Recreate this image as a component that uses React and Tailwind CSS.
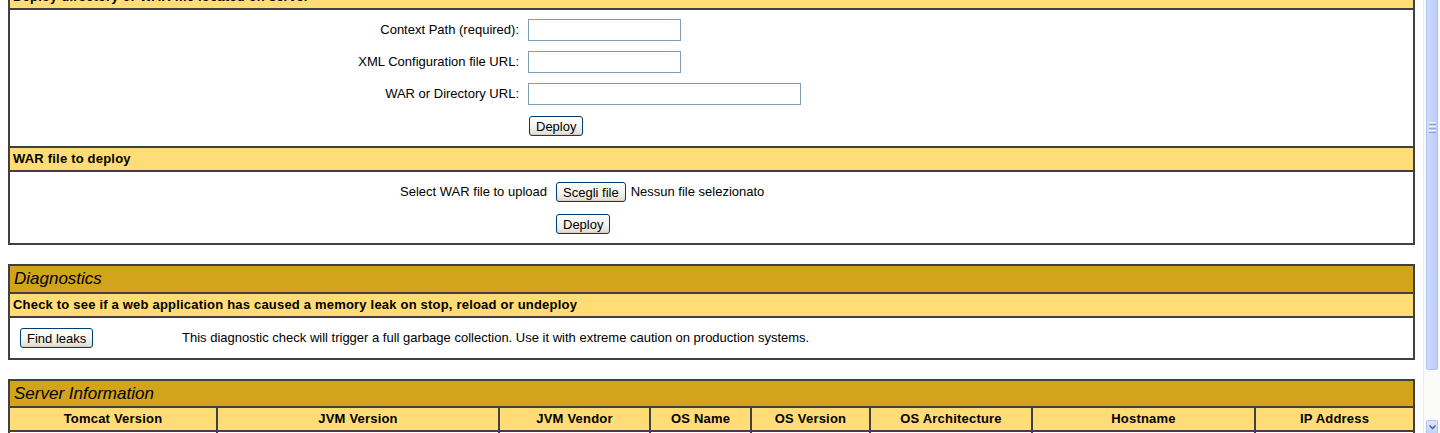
import React from 'react';

const XpButton = ({ children }) => (
  <button
    type="button"
    className="h-[20px] px-[6px] rounded-[3px] border border-[#003c74] bg-linear-to-b from-white via-[#f6f5f0] to-[#dedcd2] text-[13px] leading-none text-black shadow-[inset_0_-1px_0_#d6d0c5]"
  >
    {children}
  </button>
);

const FormRow = ({ label, labelWidth, children }) => (
  <div className="flex h-[32px] items-center">
    <div className={`${labelWidth} pr-[9px] text-right`}>{label}</div>
    <div className="flex items-center">{children}</div>
  </div>
);

const App = () => {
  const serverCols = [
    'Tomcat Version',
    'JVM Version',
    'JVM Vendor',
    'OS Name',
    'OS Version',
    'OS Architecture',
    'Hostname',
    'IP Address',
  ];

  return (
    <div className="flex h-[433px] overflow-hidden bg-white font-['Liberation_Sans',Arial,sans-serif] text-[13px] text-black">
      <div className="flex-1 px-[8px]">
        {/* Deploy */}
        <div className="-mt-[16px] border-2 border-[#404040]">
          <div className="flex h-[24px] items-center border-b-2 border-[#404040] bg-[#ffdc75] pl-[3px] font-bold tracking-[0.2px]">
            Deploy directory or WAR file located on server
          </div>
          <div className="border-b-2 border-[#404040] pt-[4px] pb-[4px]">
            <FormRow label="Context Path (required):" labelWidth="w-[518px]">
              <input type="text" className="h-[22px] w-[153px] border border-[#7f9db9] bg-white" />
            </FormRow>
            <FormRow label="XML Configuration file URL:" labelWidth="w-[518px]">
              <input type="text" className="h-[22px] w-[153px] border border-[#7f9db9] bg-white" />
            </FormRow>
            <FormRow label="WAR or Directory URL:" labelWidth="w-[518px]">
              <input type="text" className="h-[22px] w-[273px] border border-[#7f9db9] bg-white" />
            </FormRow>
            <FormRow label="" labelWidth="w-[519px]">
              <XpButton>Deploy</XpButton>
            </FormRow>
          </div>
          <div className="flex h-[24px] items-center border-b-2 border-[#404040] bg-[#ffdc75] pl-[3px] font-bold tracking-[0.2px]">
            WAR file to deploy
          </div>
          <div className="pt-[4px] pb-[3px]">
            <FormRow label="Select WAR file to upload" labelWidth="w-[546px]">
              <XpButton>Scegli file</XpButton>
              <span className="ml-[5px]">Nessun file selezionato</span>
            </FormRow>
            <FormRow label="" labelWidth="w-[546px]">
              <XpButton>Deploy</XpButton>
            </FormRow>
          </div>
        </div>

        {/* Diagnostics */}
        <div className="mt-[19px] border-2 border-[#404040]">
          <div className="flex h-[28px] items-center border-b-2 border-[#404040] bg-[#d2a41c] pl-[4px] text-[17px] italic">
            Diagnostics
          </div>
          <div className="flex h-[24px] items-center border-b-2 border-[#404040] bg-[#ffdc75] pl-[3px] font-bold tracking-[0.2px]">
            Check to see if a web application has caused a memory leak on stop, reload or undeploy
          </div>
          <div className="flex h-[40px] items-center">
            <div className="w-[172px] pl-[10px]">
              <XpButton>Find leaks</XpButton>
            </div>
            <span>
              This diagnostic check will trigger a full garbage collection. Use it with extreme caution on production systems.
            </span>
          </div>
        </div>

        {/* Server Information */}
        <div className="mt-[19px] border-2 border-[#404040]">
          <div className="flex h-[27px] items-center border-b-2 border-[#404040] bg-[#d2a41c] pl-[4px] text-[17px] italic">
            Server Information
          </div>
          <div className="grid grid-cols-[208px_282px_151px_101px_119px_162px_223px_1fr] border-b-2 border-[#404040] bg-[#ffdc75]">
            {serverCols.map((col, index) => (
              <div
                key={col}
                className={`flex h-[22px] items-center justify-center font-bold tracking-[0.2px] ${
                  index < serverCols.length - 1 ? 'border-r-2 border-[#404040]' : ''
                }`}
              >
                {col}
              </div>
            ))}
          </div>
          <div className="grid grid-cols-[208px_282px_151px_101px_119px_162px_223px_1fr]">
            {serverCols.map((col, index) => (
              <div
                key={col}
                className={`h-[22px] ${index < serverCols.length - 1 ? 'border-r-2 border-[#404040]' : ''}`}
              />
            ))}
          </div>
        </div>
      </div>

      {/* XP scrollbar */}
      <div className="flex w-[17px] flex-col bg-[#fbfbf8] pl-[2px] pr-[2px] border-l border-[#eeede5]">
        <div className="flex h-[370px] flex-col items-center justify-start rounded-b-[2px] border border-t-0 border-[#b1c5f5] bg-linear-to-r from-[#d0dcfd] via-[#c3d3fb] to-[#b9cbf8] pt-[122px]">
          <div className="flex flex-col gap-[1px]">
            <div className="h-[1px] w-[7px] bg-[#eef3ff]" />
            <div className="h-[1px] w-[7px] bg-[#8ca4e0]" />
            <div className="h-[1px] w-[7px] bg-[#eef3ff]" />
            <div className="h-[1px] w-[7px] bg-[#8ca4e0]" />
            <div className="h-[1px] w-[7px] bg-[#eef3ff]" />
            <div className="h-[1px] w-[7px] bg-[#8ca4e0]" />
          </div>
        </div>
        <div className="flex-1" />
        <div className="flex h-[13px] items-center justify-center rounded-t-[2px] border border-b-0 border-[#b1c5f5] bg-linear-to-b from-[#dce6fe] to-[#c3d3fb]">
          <svg width="7" height="5" viewBox="0 0 7 5">
            <path d="M0.5 0.5 L3.5 3.5 L6.5 0.5" fill="none" stroke="#4d6185" strokeWidth="1.5" />
          </svg>
        </div>
      </div>
    </div>
  );
};

export default App;
